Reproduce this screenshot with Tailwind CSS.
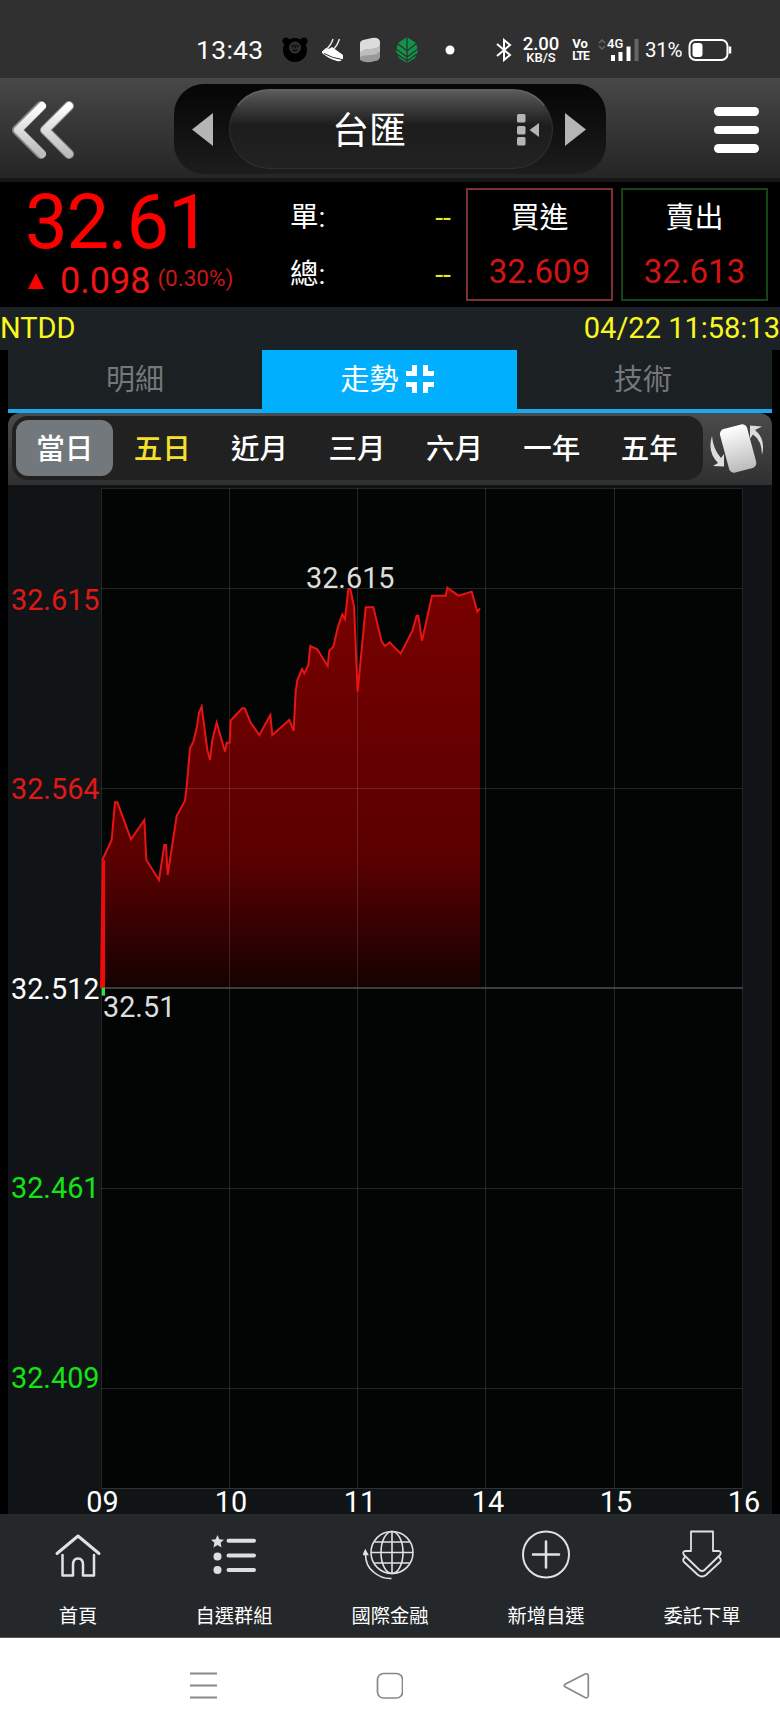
<!DOCTYPE html>
<html lang="zh-Hant">
<head>
  <meta charset="UTF-8">
  <title>台匯</title>
  <meta name="viewport" content="width=device-width, initial-scale=1.0" />
  <script src="https://cdn.jsdelivr.net/npm/@tailwindcss/browser@4"></script>
</head>
<body class="bg-black w-[780px] h-[1733px] overflow-hidden flex flex-col text-white font-[Roboto,'Noto_Sans_CJK_TC',sans-serif]">

  <!-- status bar -->
  <div class="h-[78px] shrink-0 bg-[#303030] flex items-center pl-[196px] pt-[23px] pb-px">
    <span class="w-[67px] text-[26.5px] leading-[50px] tracking-[0.3px]">13:43</span>
    <svg class="w-[199px] h-[50px] ml-[12px]" viewBox="275 25 199 50">
      <circle cx="286" cy="41" r="3.5" fill="#000"/><circle cx="304" cy="41" r="3.5" fill="#000"/>
      <circle cx="295" cy="50" r="12" fill="#000"/>
      <circle cx="295" cy="47.500" r="5.500" fill="#2b2b2b" stroke="#444" stroke-width=".8"/>
      <path d="M291 46h2.500M296.500 46h2.500M293 50q2 1.500 4 0M295 45v3" stroke="#000" fill="none"/>
      <path d="M322 51.500l4-3.500q3 2 6-1l11 8v3.500q-2 3.500-6 2.500-8-2-15-8z" fill="#fff"/>
      <path d="M326 49.500q5-4 7-10.500M333.500 49.500q4-4 6-10.500" stroke="#e6e6e6" stroke-width="1.500" fill="none"/>
      <path d="M324 53.500q8 4.500 18 6" stroke="#333" fill="none"/>
      <path d="M360 43q10 1 14-5 5 0 6 4v15q-1 4-5 4-9 3-15-1z" fill="#999"/>
      <path d="M360 43q0-2 3-3l9-2q7-1 8 4v3q-2 4-10 4-7 0-10 4z" fill="#dcdcdc"/>
      <path d="M360 53q3-4 10-4 8 0 10-4v6q-3 4-10 4-7 0-10 2z" fill="#bdbdbd"/>
      <path d="M407 37l9 6 2 8-3 7-8 5-8-5-3-7 2-8z" fill="#109548"/>
      <path d="M407 37v26M397 43l10 8 10-8M396 49l11 8 11-8M397 54l10 7 10-7" stroke="#303030" stroke-width="1.300" fill="none"/>
      <circle cx="450" cy="50" r="4.500" fill="#fff"/>
    </svg>
    <svg class="w-[16px] h-[24px] ml-[22px]" viewBox="0 0 16 24" fill="none" stroke="#fff" stroke-width="2"><path d="M1 6l13 11-6 5V2l6 5L1 18"/></svg>
    <div class="w-[38px] ml-[10px] flex flex-col items-center font-medium">
      <span class="text-[18.5px] leading-[15px] whitespace-nowrap">2.00</span>
      <span class="text-[13px] leading-[12px] whitespace-nowrap">KB/S</span>
    </div>
    <div class="w-[18px] ml-[11px] flex flex-col items-center font-bold leading-[12px]">
      <span class="text-[13px]">Vo</span>
      <span class="text-[12px] tracking-[-1px] -mr-px">LTE</span>
    </div>
    <div class="relative w-[42px] h-[26px] ml-[9px]">
      <span class="absolute left-[9px] top-0 text-[13px] leading-[13px] font-medium">4G</span>
      <svg class="w-[42px] h-[26px]" viewBox="0 0 42 26">
        <path d="M1 6l3-3 3 3M1 9l3 3 3-3" stroke="#666" stroke-width="1.500" fill="none"/>
        <path d="M15 24v-6M22.500 24v-9M30.500 24V9.500" stroke="#fff" stroke-width="4"/>
        <path d="M38.500 24V2" stroke="#666" stroke-width="4"/>
      </svg>
    </div>
    <span class="ml-[5px] w-[38px] text-[20.5px] leading-[24px] tracking-[-0.3px]">31%</span>
    <svg class="w-[44px] h-[24px] ml-[5px]" viewBox="0 0 44 24">
      <rect x="1.500" y="2" width="38" height="20" rx="6" fill="none" stroke="#fff" stroke-width="2"/>
      <rect x="4.500" y="5" width="10" height="14" rx="3" fill="#fff"/>
      <path d="M42 8.500v7" stroke="#fff" stroke-width="2.500"/>
    </svg>
  </div>

  <!-- header -->
  <header class="h-[104px] shrink-0 bg-linear-to-b from-[#484848] to-[#252525] border-b-4 border-[#161616] flex items-start">
    <svg class="w-[66px] h-[64px] mt-[20px] ml-[10px]" viewBox="10 98 66 64">
      <defs><linearGradient id="metal" x1="0" y1="0" x2="0" y2="1"><stop offset="0" stop-color="#fff"/><stop offset="1" stop-color="#bbb"/></linearGradient></defs>
      <path d="M41 106L17 130l24 24M69 106l-24 24 24 24" fill="none" stroke="#888" stroke-width="10" stroke-linecap="round" stroke-linejoin="round"/>
      <path d="M42 106L18 130l24 24M69 106l-24 24 24 24" fill="none" stroke="url(#metal)" stroke-width="8" stroke-linecap="round" stroke-linejoin="round"/>
    </svg>
    <div class="w-[432px] h-[90px] ml-[98px] mt-[6px] rounded-[30px] bg-linear-to-b from-[#060606] to-[#1d1d1d] flex items-center">
      <svg class="w-[22px] h-[35px] ml-[18px]" viewBox="0 0 22 35"><path d="M0 17.500L21 1v33z" fill="#b5b5b5"/></svg>
      <div class="w-[324px] h-[80px] ml-[15px] rounded-[40px] border border-t-2 border-[#303030] border-t-[#606060] bg-linear-to-b from-[#5a5a5a] via-[#1d1d1d] via-45% to-[#222] flex items-center">
        <span class="ml-[102px] w-[76px] mt-[4px] text-[37px] leading-[60px]">台匯</span>
        <svg class="w-[24px] h-[34px] ml-[108px]" viewBox="517 112 24 34" fill="#b5b5b5">
          <rect x="518" y="113" width="8.500" height="8.500" rx="1.500"/><rect x="518" y="125" width="8.500" height="8.500" rx="1.500"/><rect x="518" y="136" width="8.500" height="8.500" rx="1.500"/>
          <path d="M530.500 129l9.500-7v14z"/>
        </svg>
      </div>
      <svg class="w-[22px] h-[35px] ml-[12px]" viewBox="0 0 22 35"><path d="M21 17.500L0 1v33z" fill="#b5b5b5"/></svg>
    </div>
    <div class="ml-[108px] mt-[29px] flex flex-col gap-[10px]">
      <div class="w-[45px] h-[8.5px] rounded-full bg-white"></div>
      <div class="w-[45px] h-[8.5px] rounded-full bg-white"></div>
      <div class="w-[45px] h-[8.5px] rounded-full bg-white"></div>
    </div>
  </header>

  <!-- quote -->
  <section class="h-[125px] shrink-0 bg-black flex">
    <div class="w-[290px] pl-[25px] text-[#f00]">
      <div class="text-[76px] leading-[80px] tracking-[-1.3px]">32.61</div>
      <div class="flex h-[38px] items-start whitespace-nowrap">
        <svg class="w-[16px] h-[16px] mt-[11px] ml-[3px]" viewBox="0 0 16 16"><path d="M8 0l8 16H0z" fill="#f00"/></svg>
        <span class="ml-[16px] text-[36px] leading-[39px] text-[#f01414]">0.098</span>
        <span class="ml-[7px] text-[22.5px] leading-[33px] text-[#c81818]">(0.30%)</span>
      </div>
    </div>
    <div class="w-[161px] pt-[8px] text-[28.5px] leading-[56.5px]">
      <div class="flex justify-between"><span>單:</span><span class="text-[#eaea20]">--</span></div>
      <div class="flex justify-between"><span>總:</span><span class="text-[#eaea20]">--</span></div>
    </div>
    <div class="w-[147px] h-[113px] ml-[15px] mt-[6px] border-2 border-[#7d3030] text-center">
      <div class="text-[29px] leading-[57px]">買進</div>
      <div class="text-[33px] leading-[50px] text-[#d41414]">32.609</div>
    </div>
    <div class="w-[147px] h-[113px] ml-[8px] mt-[6px] border-2 border-[#154415] text-center">
      <div class="text-[29px] leading-[57px]">賣出</div>
      <div class="text-[33px] leading-[50px] text-[#d41414]">32.613</div>
    </div>
  </section>

  <div class="h-[43px] shrink-0 bg-[#1b2124] flex justify-between text-[29px] leading-[42px] text-[#f8f820]">
    <span>NTDD</span>
    <span>04/22 11:58:13</span>
  </div>

  <!-- tabs -->
  <nav class="h-[63px] shrink-0 mx-2 grid grid-cols-[254px_255px_255px] bg-[#1b2023] border-b-4 border-[#18a9ee] text-[29px] leading-[61px] text-center text-[#74787a]">
    <div class="h-[59px]">明細</div>
    <div class="h-[63px] bg-[#00b0ff] text-white flex justify-center items-start gap-[7px] pr-[5px]">
      <span>走勢</span>
      <svg class="w-[28px] h-[28px] mt-[15px]" viewBox="0 0 28 28" fill="none" stroke="#fff" stroke-width="5"><path d="M0 8.500h8.500V0M19.500 0v8.500H28M0 19.500h8.500V28M28 19.500h-8.500V28"/></svg>
    </div>
    <div class="h-[59px] pr-[3px]">技術</div>
  </nav>

  <!-- period selector -->
  <div class="h-[72px] shrink-0 mx-2 pl-[4px] pt-[3px] rounded-t-xl bg-linear-to-b from-[#4b4b4b] to-[#303030] flex">
    <div class="w-[691px] h-[64px] p-[4px] pr-[5px] rounded-2xl bg-[#212121] grid grid-cols-7 text-[28.5px] leading-[60px] text-center font-medium">
      <div class="h-[56px] bg-[#73787c] rounded-xl">當日</div>
      <div class="h-[56px] text-[#f4e22a]">五日</div>
      <div class="h-[56px]">近月</div>
      <div class="h-[56px]">三月</div>
      <div class="h-[56px]">六月</div>
      <div class="h-[56px]">一年</div>
      <div class="h-[56px]">五年</div>
    </div>
    <svg class="w-[56px] h-[54px] ml-[6px] mt-[5px]" viewBox="709 421 56 54">
      <rect x="724" y="426" width="28" height="45" rx="5" fill="url(#metal)" transform="rotate(-15 738 448)"/>
      <path d="M712 436q-5 16 6 27l-5 3 11 .500V454l-3 4q-8-9-9-22z" fill="#ddd"/>
      <path d="M762 455q4-16-7-25l7-3.500-12-1v13l3-4q9 6 9 20.500z" fill="#ddd"/>
    </svg>
  </div>

  <!-- intraday chart -->
  <svg class="w-[764px] h-[1029px] shrink-0 mx-2" viewBox="8 485 764 1029" font-size="28.800">
    <defs>
      <linearGradient id="area" gradientUnits="userSpaceOnUse" x1="0" y1="83" x2="0" y2="1283">
        <stop offset="0" stop-color="#780000"/><stop offset=".68" stop-color="#5a0000"/><stop offset="1" stop-color="#160202"/>
      </linearGradient>
    </defs>
    <rect x="8" y="485" width="764" height="1029" fill="#111416"/>
    <rect x="101" y="488" width="642" height="1000" fill="#030504"/>
    <g transform="translate(90 560) scale(.33333)">
      <path fill="url(#area)" d="M37 900L65 840 75 727 82 727 123 838 163 780 169 900 207 960 223 855 228 855 233 945 260 768 285 722 291 670 300 565 310 545 320 505 327 458 335 440 352 570 360 600 367 540 380 488 405 575 410 548 419 548 422 482 440 462 457 445 464 445 482 488 508 525 541 465 547 525 598 480 611 513 617 395 622 360 636 327 643 340 655 315 661 258 682 268 713 318 718 272 730 260 744 200 757 163 765 177 775 87 781 87 792 140 803 395 827 142 850 142 875 245 885 258 899 247 932 281 967 213 980 167 985 167 996 242 1026 107 1067 107 1072 83 1105 107 1145 95 1162 155 1170 145V1283H37z"/>
    </g>
    <g fill="none" stroke="#fff" stroke-opacity=".13">
      <path d="M101.500 488.500H742.500V1488.500H101.500zM229.500 488V1488M357.500 488V1488M485.500 488V1488M614.500 488V1488M101 588.500H742M101 788.500H742M101 1188.500H742M101 1388.500H742"/>
    </g>
    <path d="M101 988H743" stroke="#4a525a" stroke-width="1.500"/>
    <g transform="translate(90 560) scale(.33333)">
      <path fill="none" stroke="#e81414" stroke-width="6" d="M37 900L65 840 75 727 82 727 123 838 163 780 169 900 207 960 223 855 228 855 233 945 260 768 285 722 291 670 300 565 310 545 320 505 327 458 335 440 352 570 360 600 367 540 380 488 405 575 410 548 419 548 422 482 440 462 457 445 464 445 482 488 508 525 541 465 547 525 598 480 611 513 617 395 622 360 636 327 643 340 655 315 661 258 682 268 713 318 718 272 730 260 744 200 757 163 765 177 775 87 781 87 792 140 803 395 827 142 850 142 875 245 885 258 899 247 932 281 967 213 980 167 985 167 996 242 1026 107 1067 107 1072 83 1105 107 1145 95 1162 155 1170 145"/>
      <path fill="#f00a0a" d="M35 900h10v383H30z"/>
      <path fill="#30e040" d="M35 1283h10v24H35z"/>
    </g>
    <g text-anchor="end">
      <g fill="#e01818"><text x="99.500" y="609.500">32.615</text><text x="99.500" y="798.500">32.564</text></g>
      <text x="99.500" y="998.500" fill="#fff">32.512</text>
      <g fill="#14e414"><text x="99.500" y="1198">32.461</text><text x="99.500" y="1388">32.409</text></g>
    </g>
    <g fill="#ddd"><text x="306" y="588">32.615</text><text x="103" y="1017">32.51</text></g>
    <g fill="#fff" text-anchor="middle">
      <text x="102.500" y="1511.500">09</text><text x="231" y="1511.500">10</text><text x="360" y="1511.500">11</text>
      <text x="488" y="1511.500">14</text><text x="616" y="1511.500">15</text><text x="744" y="1511.500">16</text>
    </g>
  </svg>

  <!-- bottom menu -->
  <nav class="h-[124px] shrink-0 bg-[#24282b] border-b border-[#555] grid grid-cols-5 justify-items-center content-start pt-[12px] text-[19.3px] leading-[28px] text-center">
    <div class="flex flex-col items-center gap-[23px]">
      <svg class="w-[54px] h-[54px]" viewBox="0 0 54 54" fill="none" stroke="#dfe1e2" stroke-width="2.500" stroke-linecap="round" stroke-linejoin="round">
        <path d="M6 27.500L27 10l21 17.500" stroke-width="3"/><path d="M11.500 29v20.500H22V39q0-6.500 5-6.500t5 6.500v10.500h11V29" />
      </svg>
      <span>首頁</span>
    </div>
    <div class="flex flex-col items-center gap-[23px]">
      <svg class="w-[54px] h-[54px]" viewBox="0 0 54 54" fill="#dcdedf">
        <path d="M10.500 9l1.900 4.200 4.600.500-3.400 3.100.900 4.600-4-2.300-4 2.300.900-4.600L4 13.700l4.600-.500z"/>
        <circle cx="10.500" cy="30.500" r="4"/><circle cx="10.500" cy="44" r="4"/>
        <path d="M21.500 14.800h25.500M21.500 29.500h25.500M21.500 44h25.500" stroke="#dcdedf" stroke-width="4" stroke-linecap="round"/>
      </svg>
      <span>自選群組</span>
    </div>
    <div class="flex flex-col items-center gap-[23px]">
      <svg class="w-[54px] h-[54px]" viewBox="0 0 54 54" fill="none" stroke="#dfe1e2" stroke-width="1.600">
        <circle cx="29" cy="26.500" r="21"/><ellipse cx="29" cy="26.500" rx="11" ry="21"/><path d="M29 5.500v42M8 26.500h42M11.500 16h35M11.500 37h35"/>
        <path d="M2.500 28q0 12 8 18 8 7 18 6.500"/><path d="M.500 28.500l1.800-4 2.200 4z" fill="#dfe1e2"/>
      </svg>
      <span>國際金融</span>
    </div>
    <div class="flex flex-col items-center gap-[23px]">
      <svg class="w-[54px] h-[54px]" viewBox="0 0 54 54" fill="none" stroke="#dfe1e2" stroke-width="2">
        <circle cx="27" cy="28.500" r="23"/><path d="M27 15.500v26M14 28.500h26" stroke-width="2.500" stroke-linecap="round"/>
      </svg>
      <span>新增自選</span>
    </div>
    <div class="flex flex-col items-center gap-[23px]">
      <svg class="w-[54px] h-[54px]" viewBox="0 0 54 54" fill="none" stroke="#dfe1e2" stroke-width="1.800" stroke-linejoin="round">
        <path d="M16 5.500h22V25h6q3 1 1 4L29.500 44q-2.500 2-5 0L9 29q-2-3 1-4h6z"/>
        <path d="M10 31q-3 3-1 5l14 13q4 3 8 0l14-13q2-2-1-5"/>
      </svg>
      <span>委託下單</span>
    </div>
  </nav>

  <!-- system navigation -->
  <div class="flex-1 bg-white flex items-center pl-[190px]">
    <svg class="w-[27px] h-[27px]" viewBox="0 0 27 27" stroke="#888" stroke-width="2"><path d="M0 1.500h27M0 13.500h27M0 25.500h27"/></svg>
    <svg class="w-[27px] h-[27px] ml-[159px]" viewBox="0 0 27 27" fill="none" stroke="#888" stroke-width="1.700"><rect x="1.500" y="1.500" width="25" height="24.500" rx="6"/></svg>
    <svg class="w-[27px] h-[27px] ml-[160px]" viewBox="0 0 27 27" fill="none" stroke="#888" stroke-width="1.700"><path d="M2.500 12Q0 13.500 2.500 15L22 25.500q3 1 3.300-2V4q-.300-3-3.300-2z"/></svg>
  </div>
</body>
</html>
